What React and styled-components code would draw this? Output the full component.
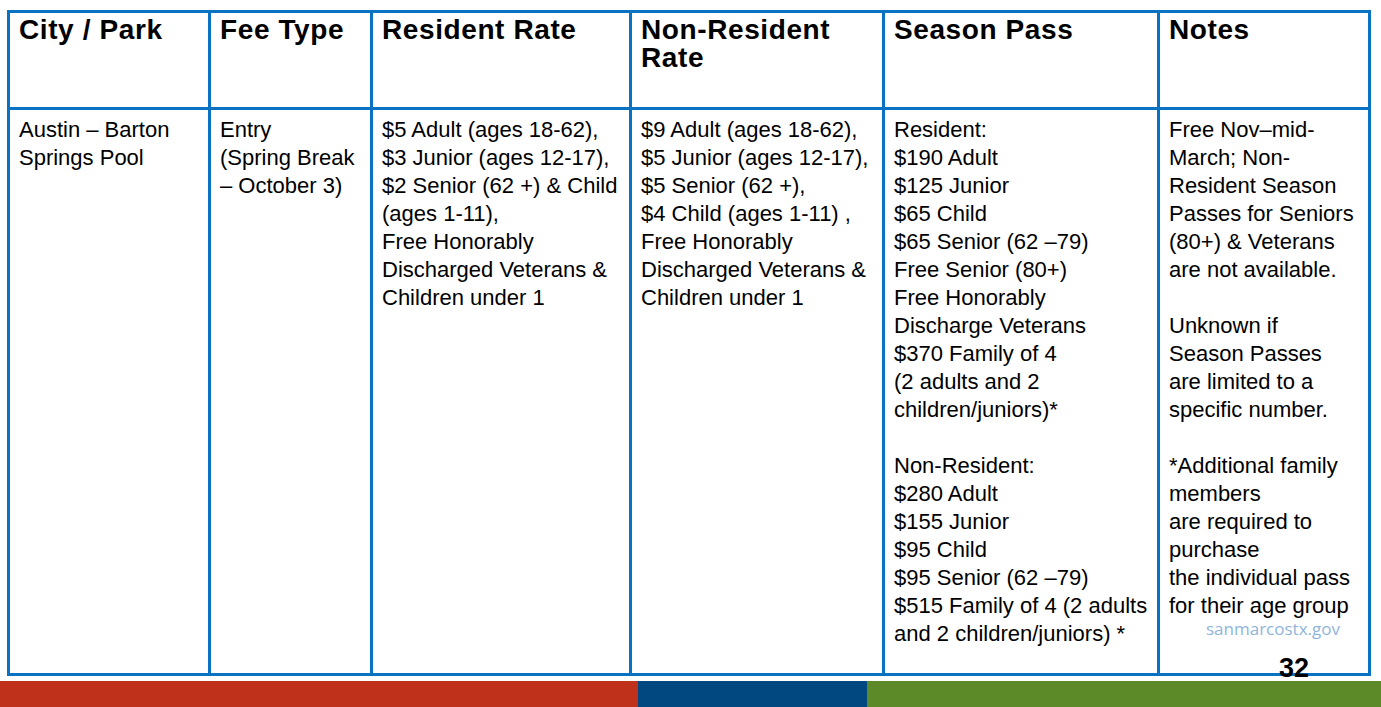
import React from "react";
import styled, { createGlobalStyle } from "styled-components";

const Global = createGlobalStyle`
  html, body { margin: 0; padding: 0; background: #ffffff; }
  body { font-family: "Liberation Sans", Arial, sans-serif; color: #000; }
`;

const Page = styled.div`
  position: relative;
  width: 1381px;
  height: 707px;
  overflow: hidden;
  display: flex;
  flex-direction: column;
  background: #fff;
`;

const Table = styled.div`
  margin: 10px 0 0 7px;
  display: grid;
  grid-template-columns: 198px 159px 256px 250px 272px 208px;
  grid-template-rows: 94px 563px;
  gap: 3px;
  padding: 3px;
  background: #0a72c2;
  width: max-content;
`;

const HeadCell = styled.div`
  background: #fff;
  padding: 3px 9px 0;
  font-size: 28px;
  line-height: 28px;
  font-weight: 700;
  letter-spacing: 0.6px;
`;

const BodyCell = styled.div`
  background: #fff;
  padding: 6px 9px 0;
  font-size: 22px;
  line-height: 28px;
`;

const Line = styled.div`
  white-space: nowrap;
  min-height: 28px;
`;

const Footer = styled.div`
  margin-top: 5px;
  height: 26px;
  display: flex;
`;

const Band = styled.div`
  height: 100%;
  width: ${(p) => p.$w}px;
  flex: ${(p) => (p.$grow ? 1 : "none")};
  background: ${(p) => p.$c};
`;

const Site = styled.div`
  position: absolute;
  left: 1206px;
  top: 617px;
  font-family: "Open Sans", "Liberation Sans", sans-serif;
  font-size: 17px;
  color: #8fb5dc;
`;

const PageNum = styled.div`
  position: absolute;
  left: 1279px;
  top: 652px;
  font-size: 27px;
  font-weight: 700;
  line-height: 32px;
`;

const headers = [
  ["City / Park"],
  ["Fee Type"],
  ["Resident Rate"],
  ["Non-Resident", "Rate"],
  ["Season Pass"],
  ["Notes"],
];

const body = [
  ["Austin – Barton", "Springs Pool"],
  ["Entry", "(Spring Break", "– October 3)"],
  [
    "$5 Adult (ages 18-62),",
    "$3 Junior (ages 12-17),",
    "$2 Senior (62 +) & Child",
    "(ages 1-11),",
    "Free Honorably",
    "Discharged Veterans &",
    "Children under 1",
  ],
  [
    "$9 Adult (ages 18-62),",
    "$5 Junior (ages 12-17),",
    "$5 Senior (62 +),",
    "$4 Child (ages 1-11) ,",
    "Free Honorably",
    "Discharged Veterans &",
    "Children under 1",
  ],
  [
    "Resident:",
    "$190 Adult",
    "$125 Junior",
    "$65 Child",
    "$65 Senior (62 –79)",
    "Free Senior (80+)",
    "Free Honorably",
    "Discharge Veterans",
    "$370 Family of 4",
    "(2 adults and 2",
    "children/juniors)*",
    "",
    "Non-Resident:",
    "$280 Adult",
    "$155 Junior",
    "$95 Child",
    "$95 Senior (62 –79)",
    "$515 Family of 4 (2 adults",
    "and 2 children/juniors) *",
  ],
  [
    "Free Nov–mid-",
    "March; Non-",
    "Resident Season",
    "Passes for Seniors",
    "(80+) & Veterans",
    "are not available.",
    "",
    "Unknown if",
    "Season Passes",
    "are limited to a",
    "specific number.",
    "",
    "*Additional family",
    "members",
    "are required to",
    "purchase",
    "the individual pass",
    "for their age group",
  ],
];

export default function App() {
  return (
    <>
      <Global />
      <Page>
        <Table>
          {headers.map((h, i) => (
            <HeadCell key={"h" + i}>
              {h.map((t, j) => (
                <Line key={j}>{t}</Line>
              ))}
            </HeadCell>
          ))}
          {body.map((c, i) => (
            <BodyCell key={"b" + i}>
              {c.map((t, j) => (
                <Line key={j}>{t || "\u00a0"}</Line>
              ))}
            </BodyCell>
          ))}
        </Table>
        <Footer>
          <Band $w={638} $c="#bf311b" />
          <Band $w={229} $c="#00487f" />
          <Band $grow $c="#5d8a29" />
        </Footer>
        <Site>sanmarcostx.gov</Site>
        <PageNum>32</PageNum>
      </Page>
    </>
  );
}
